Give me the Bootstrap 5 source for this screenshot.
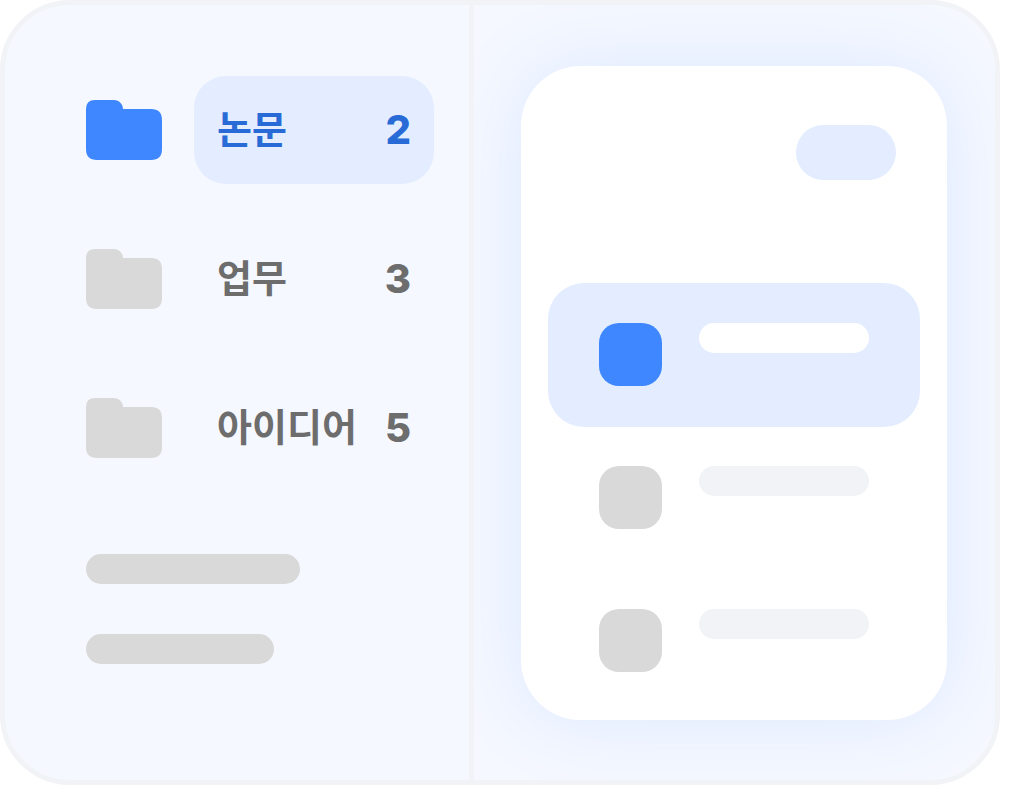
<!DOCTYPE html>
<html lang="ko">
<head>
<meta charset="utf-8">
<meta name="viewport" content="width=device-width, initial-scale=1">
<title>폴더</title>
<link href="https://cdn.jsdelivr.net/npm/bootstrap@5.3.0/dist/css/bootstrap.min.css" rel="stylesheet">
<script src="https://cdn.jsdelivr.net/npm/bootstrap@5.3.0/dist/js/bootstrap.bundle.min.js" defer></script>
<style>
  body { background: #fff; font-family: Inter, "Noto Sans CJK KR", sans-serif; }
  .frame { margin-right: 11px; min-height: 100vh; background: #f5f8ff; border: 5px solid #f2f3f6; border-radius: 70px; }
  .side { flex: 0 0 469px; border-right: 5px solid #f2f3f6; padding: 71px 35px 71px 81px; }
  .folders { gap: 41px; margin-bottom: 72px; }
  .folder-row { gap: 32px; }
  .folder-icon { width: 76px; height: 60px; fill: #d9d9d9; }
  .folder-btn { height: 108px; padding: 0 23px; border-radius: 32px; border: 0; background: transparent; color: #6d6d6d; font-size: 40px; line-height: 48px; font-weight: 800; }
  .folder-btn .title { font-size: 38px; font-weight: 700; font-family: "Noto Sans CJK KR", sans-serif; padding-bottom: 6px; }
  .is-active .folder-icon { fill: #3f87ff; }
  .is-active .folder-btn { background: #e3edff; color: #296bd6; }
  .bars { gap: 50px; }
  .bar { height: 30px; background: #d9d9d9; }
  .bar-long { width: 214px; }
  .bar-short { width: 188px; }
  .main { padding: 61px 48px 60px 47px; }
  .sheet { background: #fff; border-radius: 60px; padding: 59px 27px 7px; box-shadow: 0 0 80px rgba(61, 132, 255, .13); }
  .chip { width: 100px; height: 55px; border: 0; background: #e3edff; margin: 0 24px 103px 0; }
  .item { padding: 39px 51px 41px; gap: 37px; border-radius: 36px; }
  .thumb { width: 63px; height: 63px; border-radius: 20px; background: #d9d9d9; }
  .line { height: 30px; background: #f1f3f7; }
  .item-active { padding-top: 40px; background: #e3edff; }
  .item-active .thumb { background: #3f87ff; }
  .item-active .line { background: #fff; }
</style>
</head>
<body>
<svg class="d-none" aria-hidden="true">
  <symbol id="folder" viewBox="0 0 76 60">
    <path d="M9 0H28C33 0 37 4 37 9H65Q76 9 76 20V49Q76 60 65 60H11Q0 60 0 49V9Q0 0 9 0Z"/>
  </symbol>
</svg>
<div class="frame d-flex overflow-hidden">
  <nav class="side" aria-label="폴더">
    <ul class="folders list-unstyled d-flex flex-column">
      <li class="folder-row is-active d-flex align-items-center">
        <svg class="folder-icon flex-shrink-0" aria-hidden="true"><use href="#folder"/></svg>
        <button type="button" class="folder-btn flex-grow-1 d-flex align-items-center justify-content-between"><span class="title">논문</span><span>2</span></button>
      </li>
      <li class="folder-row d-flex align-items-center">
        <svg class="folder-icon flex-shrink-0" aria-hidden="true"><use href="#folder"/></svg>
        <button type="button" class="folder-btn flex-grow-1 d-flex align-items-center justify-content-between"><span class="title">업무</span><span>3</span></button>
      </li>
      <li class="folder-row d-flex align-items-center">
        <svg class="folder-icon flex-shrink-0" aria-hidden="true"><use href="#folder"/></svg>
        <button type="button" class="folder-btn flex-grow-1 d-flex align-items-center justify-content-between"><span class="title">아이디어</span><span>5</span></button>
      </li>
    </ul>
    <div class="bars d-flex flex-column">
      <div class="bar bar-long rounded-pill"></div>
      <div class="bar bar-short rounded-pill"></div>
    </div>
  </nav>
  <main class="main flex-grow-1 overflow-hidden">
    <div class="sheet">
      <div class="d-flex justify-content-end">
        <button type="button" class="chip rounded-pill" aria-label="추가"></button>
      </div>
      <div class="item item-active d-flex">
        <div class="thumb flex-shrink-0"></div>
        <div class="line rounded-pill flex-grow-1"></div>
      </div>
      <div class="item d-flex">
        <div class="thumb flex-shrink-0"></div>
        <div class="line rounded-pill flex-grow-1"></div>
      </div>
      <div class="item d-flex">
        <div class="thumb flex-shrink-0"></div>
        <div class="line rounded-pill flex-grow-1"></div>
      </div>
    </div>
  </main>
</div>
</body>
</html>
